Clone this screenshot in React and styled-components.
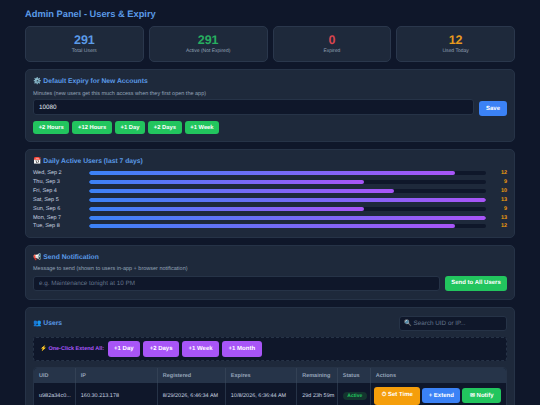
import React from "react";
import styled, { createGlobalStyle } from "styled-components";

const Global = createGlobalStyle`
  html, body { margin: 0; padding: 0; height: 405px; overflow: hidden; background: #0f172a; }
  * { box-sizing: border-box; text-rendering: geometricPrecision; }
  body { font-family: "Liberation Sans", Arial, sans-serif; color: #e2e8f0; }
`;

const Page = styled.div`
  padding: 9px 25px 0;
  display: flex;
  flex-direction: column;
`;
const Title = styled.h1`
  margin: 0 0 7px;
  font-size: 9.3px;
  line-height: 10px;
  font-weight: 700;
  color: #5b9be8;
`;
const Stats = styled.div`
  display: grid;
  grid-template-columns: repeat(4, 1fr);
  gap: 5px;
  margin-bottom: 7px;
`;
const Stat = styled.div`
  height: 36px;
  background: #1e293b;
  border: 1px solid #2a374c;
  border-radius: 5px;
  display: flex;
  flex-direction: column;
  align-items: center;
  padding-top: 6px;
`;
const StatNum = styled.div`
  font-size: 12.5px;
  line-height: 14px;
  font-weight: 700;
  color: ${(p) => p.$color};
`;
const StatLabel = styled.div`
  font-size: 5px;
  line-height: 6px;
  margin-top: 1px;
  color: #94a3b8;
`;
const Panel = styled.section`
  background: #1e293b;
  border: 1px solid #263347;
  border-radius: 5px;
  padding: ${(p) => p.$pad || "7px"};
  margin-bottom: 7px;
`;
const PanelTitle = styled.h2`
  margin: 0;
  padding-top: 1px;
  font-size: 6.75px;
  line-height: 8px;
  font-weight: 700;
  color: #5b9be8;
`;
const FieldLabel = styled.div`
  font-size: 5.5px;
  line-height: 6px;
  color: #94a3b8;
  margin: ${(p) => p.$m};
`;
const InputRow = styled.div`
  display: flex;
  align-items: flex-start;
  gap: 5px;
`;
const TextInput = styled.input`
  flex: 1;
  min-width: 0;
  height: ${(p) => p.$h || "16px"};
  background: #0f172a;
  border: 1px solid #263347;
  border-radius: 3px;
  padding: 0 5px;
  font: 6.3px "Liberation Sans", Arial, sans-serif;
  color: #e2e8f0;
  outline: none;
  &::placeholder { color: #64748b; opacity: 1; }
`;
const Button = styled.button`
  border: 0;
  border-radius: 3px;
  background: ${(p) => p.$bg};
  color: #fff;
  font: 700 ${(p) => p.$fs || "6px"} "Liberation Sans", Arial, sans-serif;
  height: ${(p) => p.$h || "15px"};
  width: ${(p) => p.$w || "auto"};
  padding: 0 ${(p) => p.$px || "5.7px"};
  margin-top: ${(p) => p.$mt || "0"};
  white-space: nowrap;
  flex: none;
  display: inline-flex;
  align-items: center;
  justify-content: center;
`;
const Presets = styled.div`
  display: flex;
  gap: 3px;
  margin-top: 5px;
`;
const Bars = styled.div`
  display: flex;
  flex-direction: column;
  margin-top: 3px;
`;
const BarRow = styled.div`
  height: 8.85px;
  display: flex;
  align-items: center;
`;
const BarLabel = styled.div`
  width: 56px;
  flex: none;
  font-size: 5.5px;
  color: #cbd5e1;
`;
const Track = styled.div`
  flex: 1;
  height: 4px;
  background: #0f172a;
  border-radius: 2px;
  overflow: hidden;
`;
const Fill = styled.div`
  height: 100%;
  border-radius: 2px;
  background: linear-gradient(90deg, #3b82f6, #a855f7);
`;
const BarValue = styled.div`
  width: 21px;
  flex: none;
  text-align: right;
  font-size: 5.5px;
  font-weight: 700;
  color: #f59e0b;
`;
const UsersHead = styled.div`
  display: flex;
  justify-content: space-between;
  align-items: center;
  margin: 1px 0 6px;
`;
const Search = styled.input`
  width: 108px;
  height: 15px;
  background: #0f172a;
  border: 1px solid #263347;
  border-radius: 3px;
  padding: 0 4px;
  font: 6.3px "Liberation Sans", Arial, sans-serif;
  color: #e2e8f0;
  outline: none;
  &::placeholder { color: #64748b; opacity: 1; }
`;
const ExtendBar = styled.div`
  height: 24px;
  background: #0f172a;
  border: 1px dashed #263347;
  border-radius: 3px;
  display: flex;
  align-items: center;
  padding-left: 6px;
  gap: 3px;
  margin-bottom: 6px;
`;
const ExtendLabel = styled.span`
  font-size: 5.5px;
  font-weight: 700;
  color: #a855f7;
  margin-right: 0.5px;
`;
const TableWrap = styled.div`
  border: 1px solid #263347;
  border-radius: 4px;
  overflow: hidden;
`;
const Table = styled.table`
  width: 100%;
  table-layout: fixed;
  border-collapse: collapse;
  background: #0f172a;
`;
const Col = styled.col`
  width: ${(p) => p.$w}px;
`;
const Th = styled.th`
  height: 15px;
  background: #263449;
  padding: 1px 5px 0;
  text-align: left;
  font-size: 5.5px;
  font-weight: 700;
  color: #94a3b8;
  border-right: 1px solid #334155;
  &:last-child { border-right: 0; }
`;
const Td = styled.td`
  height: 26px;
  padding: 1px 5px 0;
  font-size: 5.5px;
  color: #cbd5e1;
  white-space: nowrap;
  overflow: hidden;
  border-right: 1px solid #263347;
  &:last-child { border-right: 0; overflow: visible; padding: 0 0 0 3.5px; }
`;
const Badge = styled.span`
  display: inline-block;
  width: 24px;
  text-align: center;
  line-height: 8px;
  border-radius: 4px;
  background: #14352f;
  color: #22c55e;
  font-size: 5px;
  font-weight: 700;
`;
const Actions = styled.div`
  display: flex;
  align-items: center;
  gap: 2px;
`;

const GREEN = "#22c55e";
const BLUE = "#3b82f6";
const PURPLE = "#a855f7";
const ORANGE = "#f59e0b";

const days = [
  ["Wed, Sep 2", 12],
  ["Thu, Sep 3", 9],
  ["Fri, Sep 4", 10],
  ["Sat, Sep 5", 13],
  ["Sun, Sep 6", 9],
  ["Mon, Sep 7", 13],
  ["Tue, Sep 8", 12],
];
const stats = [
  ["291", "Total Users", "#5b9be8"],
  ["291", "Active (Not Expired)", "#27ae60"],
  ["0", "Expired", "#d9454f"],
  ["12", "Used Today", "#e89b1e"],
];
const colWidths = [41.3, 82, 68, 71.4, 40.6, 33, 135.7];

export default function App() {
  return (
    <Page>
      <Global />
      <Title>Admin Panel - Users &amp; Expiry</Title>
      <Stats>
        {stats.map(([n, l, c]) => (
          <Stat key={l}>
            <StatNum $color={c}>{n}</StatNum>
            <StatLabel>{l}</StatLabel>
          </Stat>
        ))}
      </Stats>

      <Panel>
        <PanelTitle>⚙️ Default Expiry for New Accounts</PanelTitle>
        <FieldLabel $m="5px 0 2px">
          Minutes (new users get this much access when they first open the app)
        </FieldLabel>
        <InputRow>
          <TextInput defaultValue="10080" />
          <Button $bg={BLUE} $w="28px" $mt="2px">Save</Button>
        </InputRow>
        <Presets>
          {["+2 Hours", "+12 Hours", "+1 Day", "+2 Days", "+1 Week"].map((t) => (
            <Button key={t} $bg={GREEN} $h="13px" $fs="5.8px">{t}</Button>
          ))}
        </Presets>
      </Panel>

      <Panel $pad="7px 7px 6px">
        <PanelTitle>📅 Daily Active Users (last 7 days)</PanelTitle>
        <Bars>
          {days.map(([d, v]) => (
            <BarRow key={d}>
              <BarLabel>{d}</BarLabel>
              <Track>
                <Fill style={{ width: `${(v / 13) * 100}%` }} />
              </Track>
              <BarValue>{v}</BarValue>
            </BarRow>
          ))}
        </Bars>
      </Panel>

      <Panel $pad="7px 7px 8px">
        <PanelTitle>📢 Send Notification</PanelTitle>
        <FieldLabel $m="4px 0 4px">
          Message to send (shown to users in-app + browser notification)
        </FieldLabel>
        <InputRow>
          <TextInput $h="15px" placeholder="e.g. Maintenance tonight at 10 PM" />
          <Button $bg={GREEN} $w="62px">Send to All Users</Button>
        </InputRow>
      </Panel>

      <Panel>
        <UsersHead>
          <PanelTitle>👥 Users</PanelTitle>
          <Search placeholder="🔍 Search UID or IP..." />
        </UsersHead>
        <ExtendBar>
          <ExtendLabel>⚡ One-Click Extend All:</ExtendLabel>
          {["+1 Day", "+2 Days", "+1 Week", "+1 Month"].map((t) => (
            <Button key={t} $bg={PURPLE} $h="16px" $px="6.5px">{t}</Button>
          ))}
        </ExtendBar>
        <TableWrap>
          <Table>
            <colgroup>
              {colWidths.map((w, i) => (
                <Col key={i} $w={w} />
              ))}
            </colgroup>
            <thead>
              <tr>
                {["UID", "IP", "Registered", "Expires", "Remaining", "Status", "Actions"].map((h) => (
                  <Th key={h}>{h}</Th>
                ))}
              </tr>
            </thead>
            <tbody>
              <tr>
                <Td>u982a34c0...</Td>
                <Td>160.30.213.178</Td>
                <Td>8/29/2026, 6:46:34 AM</Td>
                <Td>10/8/2026, 6:36:44 AM</Td>
                <Td>29d 23h 59m</Td>
                <Td><Badge>Active</Badge></Td>
                <Td>
                  <Actions>
                    <Button $bg={ORANGE} $h="18px" $w="46px" $px="0">⏱ Set Time</Button>
                    <Button $bg={BLUE} $w="38px" $px="0">+ Extend</Button>
                    <Button $bg={GREEN} $w="39px" $px="0">✉ Notify</Button>
                  </Actions>
                </Td>
              </tr>
            </tbody>
          </Table>
        </TableWrap>
      </Panel>
    </Page>
  );
}
